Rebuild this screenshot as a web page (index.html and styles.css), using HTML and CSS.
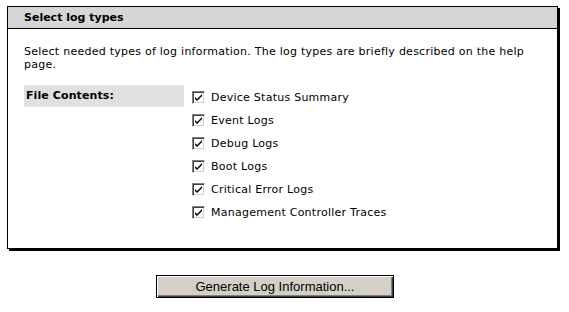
FILE: index.html
```html
<!DOCTYPE html>
<html lang="en">
<head>
    <meta charset="UTF-8">
    <title>Select log types</title>
    <link rel="stylesheet" href="styles.css">
</head>
<body>
    <div class="panel">
        <div class="panel-title">Select log types</div>
        <div class="panel-body">
            <p class="intro">Select needed types of log information. The log types are briefly described on the help page.</p>
            <div class="form-row">
                <div class="field-label">File Contents:</div>
                <div class="options">
                    <label class="option"><span class="check"><svg width="9" height="9" viewBox="0 0 9 9"><path d="M1 4 L3 6 L8 1 L8 3 L3 8 L1 6 Z" fill="#000"/></svg></span>Device Status Summary</label>
                    <label class="option"><span class="check"><svg width="9" height="9" viewBox="0 0 9 9"><path d="M1 4 L3 6 L8 1 L8 3 L3 8 L1 6 Z" fill="#000"/></svg></span>Event Logs</label>
                    <label class="option"><span class="check"><svg width="9" height="9" viewBox="0 0 9 9"><path d="M1 4 L3 6 L8 1 L8 3 L3 8 L1 6 Z" fill="#000"/></svg></span>Debug Logs</label>
                    <label class="option"><span class="check"><svg width="9" height="9" viewBox="0 0 9 9"><path d="M1 4 L3 6 L8 1 L8 3 L3 8 L1 6 Z" fill="#000"/></svg></span>Boot Logs</label>
                    <label class="option"><span class="check"><svg width="9" height="9" viewBox="0 0 9 9"><path d="M1 4 L3 6 L8 1 L8 3 L3 8 L1 6 Z" fill="#000"/></svg></span>Critical Error Logs</label>
                    <label class="option"><span class="check"><svg width="9" height="9" viewBox="0 0 9 9"><path d="M1 4 L3 6 L8 1 L8 3 L3 8 L1 6 Z" fill="#000"/></svg></span>Management Controller Traces</label>
                </div>
            </div>
        </div>
    </div>
    <div class="actions">
        <button class="generate-button">Generate Log Information...</button>
    </div>
</body>
</html>
```

FILE: styles.css
```css
body {
    font-family: "DejaVu Sans", Verdana, sans-serif;
    font-size: 11px;
    margin: 0;
    padding: 6px 0 0 7px;
    background-color: #fff;
    color: #000;
}
.panel {
    width: 551px;
    height: 243px;
    box-sizing: border-box;
    border: 1px solid #000;
    box-shadow: 2px 2px 0 #000;
}
.panel-title {
    height: 21px;
    line-height: 21px;
    background-color: #d6d6d6;
    border-bottom: 1px solid #000;
    padding-left: 16px;
    font-weight: bold;
}
.panel-body {
    padding: 16px 16px 0 16px;
    letter-spacing: 0.25px;
}
.intro {
    margin: 0;
    line-height: 13px;
    padding-right: 10px;
}
.form-row {
    display: flex;
    margin-top: 14px;
}
.field-label {
    width: 158px;
    height: 22px;
    line-height: 22px;
    padding-left: 2px;
    background-color: #e0e0e0;
    font-weight: bold;
    letter-spacing: 0.1px;
}
.options {
    display: flex;
    flex-direction: column;
    padding-left: 8px;
    padding-top: 1px;
}
.option {
    display: flex;
    align-items: center;
    height: 23px;
}
.check {
    width: 13px;
    height: 13px;
    box-sizing: border-box;
    border-top: 1px solid #808080;
    border-left: 1px solid #808080;
    border-right: 1px solid #fff;
    border-bottom: 1px solid #fff;
    box-shadow: inset 1px 1px 0 #404040, inset -1px -1px 0 #d4d0c8;
    background: #fff;
    display: flex;
    align-items: center;
    justify-content: center;
    margin-right: 6px;
}
.actions {
    padding: 26px 0 0 149px;
}
.generate-button {
    width: 238px;
    height: 23px;
    font-family: "Liberation Sans", Arial, sans-serif;
    font-size: 13px;
    background-color: #d4d0c8;
    border: 1px solid #000;
    box-shadow: inset 1px 1px 0 #fff, inset -1px -1px 0 #404040, inset -2px -2px 0 #808080;
    padding: 0;
    color: #000;
}
```
